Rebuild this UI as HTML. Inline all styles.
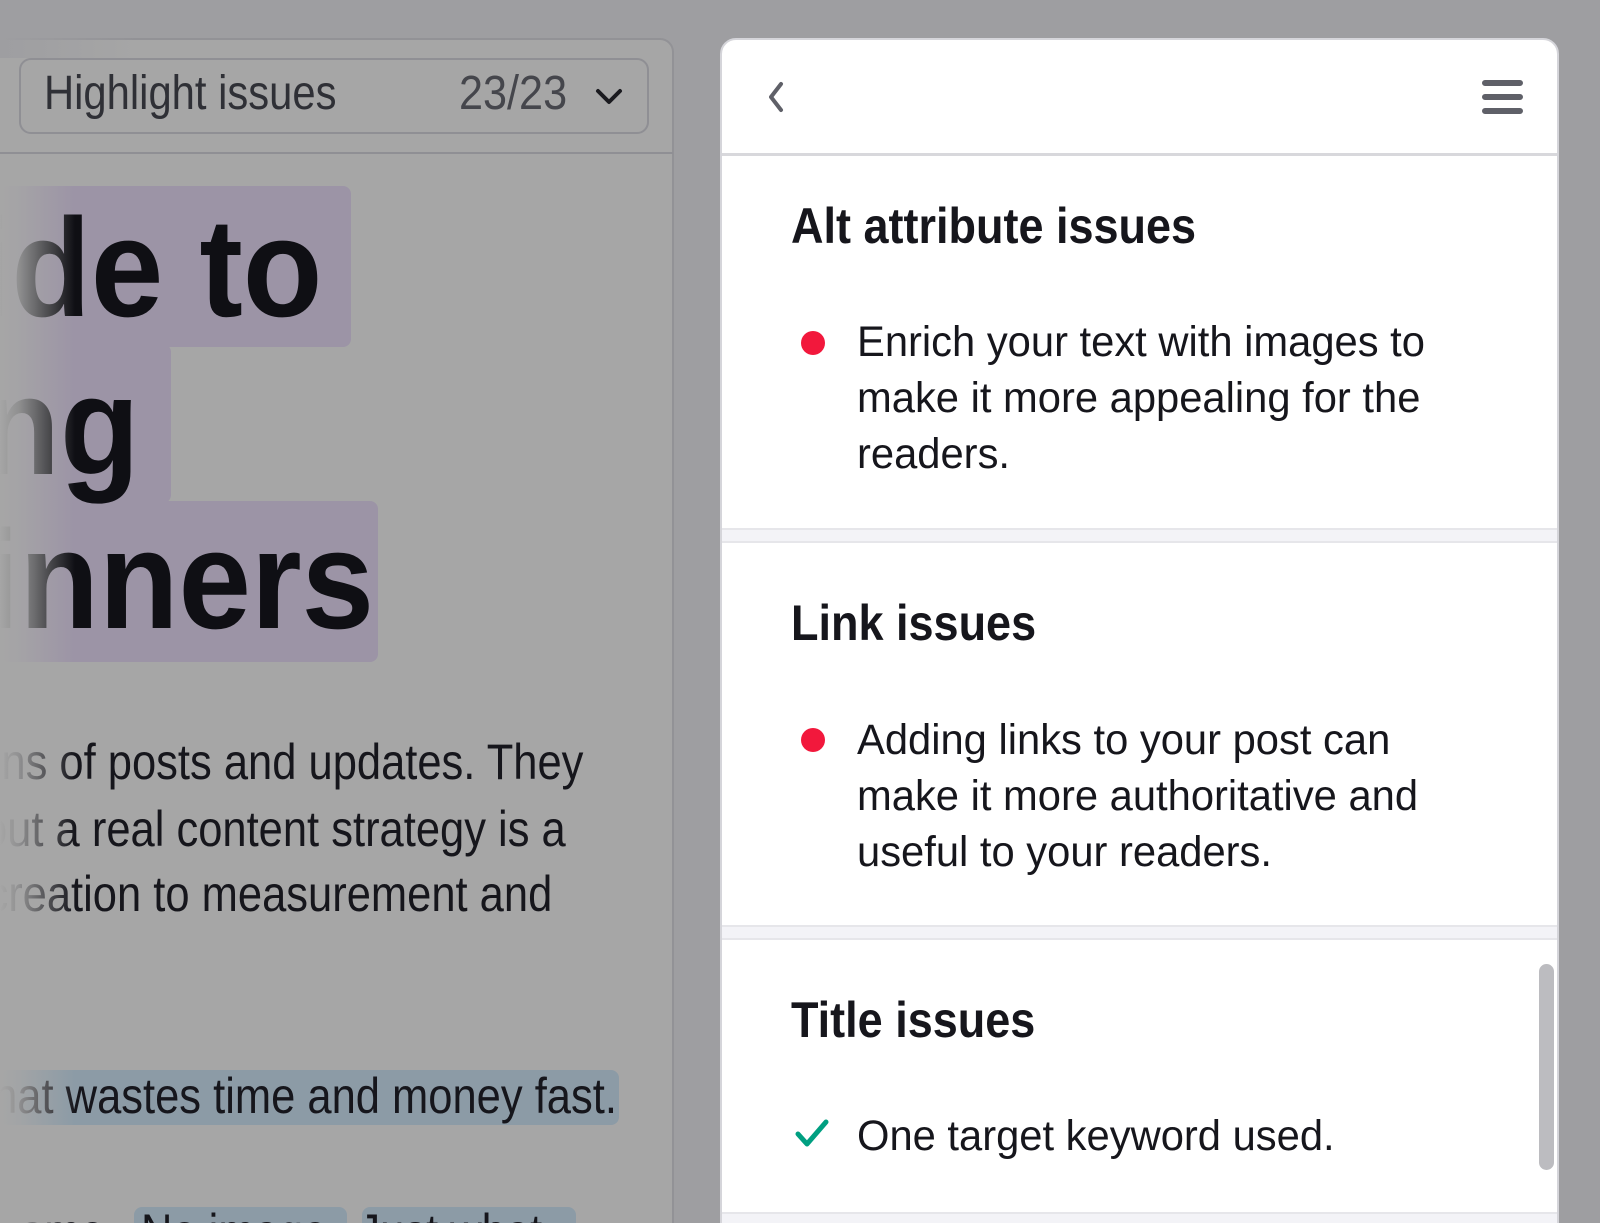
<!DOCTYPE html>
<html><head><meta charset="utf-8"><style>
*{margin:0;padding:0;box-sizing:border-box}
html,body{width:1600px;height:1223px;overflow:hidden}
body{background:#9e9ea1;font-family:"Liberation Sans",sans-serif;position:relative}
.a{position:absolute;white-space:nowrap;line-height:1}
.l{transform-origin:left center}
.r{transform-origin:right center;text-align:right}
#lp{position:absolute;left:-20px;top:38px;width:694px;height:1300px;background:#a6a6a6;border:2px solid #929296;border-radius:14px}
.hl{position:absolute;border-radius:8px}
#rp{position:absolute;left:720px;top:38px;width:839px;height:1300px;background:#fff;border:2px solid #d5d5da;border-radius:16px;overflow:hidden}
.sep{position:absolute;left:0;width:100%;height:15px;background:#f3f3f7;border-top:2px solid #e6e6ea;border-bottom:2px solid #e6e6ea}
.h{font-weight:bold;font-size:50px;color:#16161c;transform:scaleX(.9);transform-origin:left center}
.b{font-size:43px;color:#16161c;transform:scaleX(.97);transform-origin:left center}
.dot{position:absolute;width:24px;height:24px;border-radius:50%;background:#f2183c}
</style></head><body>
<div id="lp"></div>
<div style="position:absolute;left:19px;top:58px;width:630px;height:76px;border:2px solid #8f8f94;border-radius:12px"></div>
<div class="a l" style="left:44px;top:70px;font-size:48px;color:#2f3036;transform:scaleX(.87)">Highlight issues</div>
<div class="a l" style="left:459px;top:70px;font-size:48px;color:#45464c;transform:scaleX(.9)">23/23</div>
<svg style="position:absolute;left:594px;top:86px" width="30" height="22" viewBox="0 0 30 22"><path d="M4 5 L15 16 L26 5" fill="none" stroke="#1a1a1f" stroke-width="4" stroke-linecap="round" stroke-linejoin="round"/></svg>
<div style="position:absolute;left:0;top:152px;width:673px;height:2px;background:#8f8f94"></div>
<div class="hl" style="left:0;top:186px;width:351px;height:161px;background:#9c94a6"></div>
<div class="hl" style="left:0;top:344px;width:171px;height:159px;background:#9c94a6"></div>
<div class="hl" style="left:0;top:501px;width:378px;height:161px;background:#9c94a6"></div>
<div class="hl" style="left:0;top:1070px;width:619px;height:55px;background:#8c9ba6"></div>
<div class="hl" style="left:134px;top:1207px;width:213px;height:40px;background:#8c9ba6"></div>
<div class="hl" style="left:362px;top:1207px;width:214px;height:40px;background:#8c9ba6"></div>
<div class="a r" style="right:1278px;top:198px;font-size:140px;font-weight:bold;color:#0f0f14;transform:scaleX(.93)">guide to</div>
<div class="a r" style="right:1460px;top:356px;font-size:140px;font-weight:bold;color:#0f0f14;transform:scaleX(.93)">ting</div>
<div class="a r" style="right:1226px;top:510px;font-size:140px;font-weight:bold;color:#0f0f14;transform:scaleX(.93)">beginners</div>
<div class="a r" style="right:1017px;top:737px;font-size:50px;color:#16161c;transform:scaleX(.87)">dozens of posts and updates. They</div>
<div class="a r" style="right:1034px;top:804px;font-size:50px;color:#16161c;transform:scaleX(.87)">without a real content strategy is a</div>
<div class="a r" style="right:1048px;top:869px;font-size:50px;color:#16161c;transform:scaleX(.87)">from creation to measurement and</div>
<div class="a r" style="right:983px;top:1071px;font-size:50px;color:#16161c;transform:scaleX(.87)">that wastes time and money fast.</div>
<div class="a l" style="left:20px;top:1207px;font-size:50px;color:#16161c;transform:scaleX(.87)">ome. <span style="margin-left:14px">No image</span> <span style="margin-left:22px">Just what</span></div>
<div style="position:absolute;left:0;top:154px;width:75px;height:1069px;background:linear-gradient(90deg,#a6a6a6 0%,rgba(166,166,166,.85) 25%,rgba(166,166,166,0) 100%)"></div>
<div style="position:absolute;left:0;top:38px;width:140px;height:20px;background:linear-gradient(90deg,#9e9ea1,rgba(158,158,161,0))"></div>

<div id="rp">
<svg style="position:absolute;left:42px;top:40px" width="24" height="34" viewBox="0 0 24 34"><path d="M17 4 L7 17 L17 30" fill="none" stroke="#5f6068" stroke-width="4" stroke-linecap="round" stroke-linejoin="round"/></svg>
<svg style="position:absolute;left:760px;top:38px" width="42" height="38" viewBox="0 0 42 38"><path d="M3 5 H38 M3 19 H38 M3 33 H38" stroke="#5f6068" stroke-width="6" stroke-linecap="round"/></svg>
<div style="position:absolute;left:0;top:113px;width:100%;height:3px;background:#d8d8dc"></div>
<div class="a h" style="left:69px;top:161px">Alt attribute issues</div>
<div class="dot" style="left:79px;top:291px"></div>
<div class="a b" style="left:135px;top:281px">Enrich your text with images to</div>
<div class="a b" style="left:135px;top:337px">make it more appealing for the</div>
<div class="a b" style="left:135px;top:393px">readers.</div>
<div class="sep" style="top:488px"></div>
<div class="a h" style="left:69px;top:558px">Link issues</div>
<div class="dot" style="left:79px;top:688px"></div>
<div class="a b" style="left:135px;top:679px">Adding links to your post can</div>
<div class="a b" style="left:135px;top:735px">make it more authoritative and</div>
<div class="a b" style="left:135px;top:791px">useful to your readers.</div>
<div class="sep" style="top:885px"></div>
<div class="a h" style="left:69px;top:955px">Title issues</div>
<svg style="position:absolute;left:72px;top:1078px" width="40" height="32" viewBox="0 0 40 32"><path d="M4 16 L13 26 L32 4" fill="none" stroke="#009f81" stroke-width="5" stroke-linecap="round" stroke-linejoin="round"/></svg>
<div class="a b" style="left:135px;top:1075px">One target keyword used.</div>
<div style="position:absolute;left:817px;top:924px;width:15px;height:206px;border-radius:8px;background:#bcbcc0"></div>
<div class="sep" style="top:1172px"></div>
</div>
</body></html>
